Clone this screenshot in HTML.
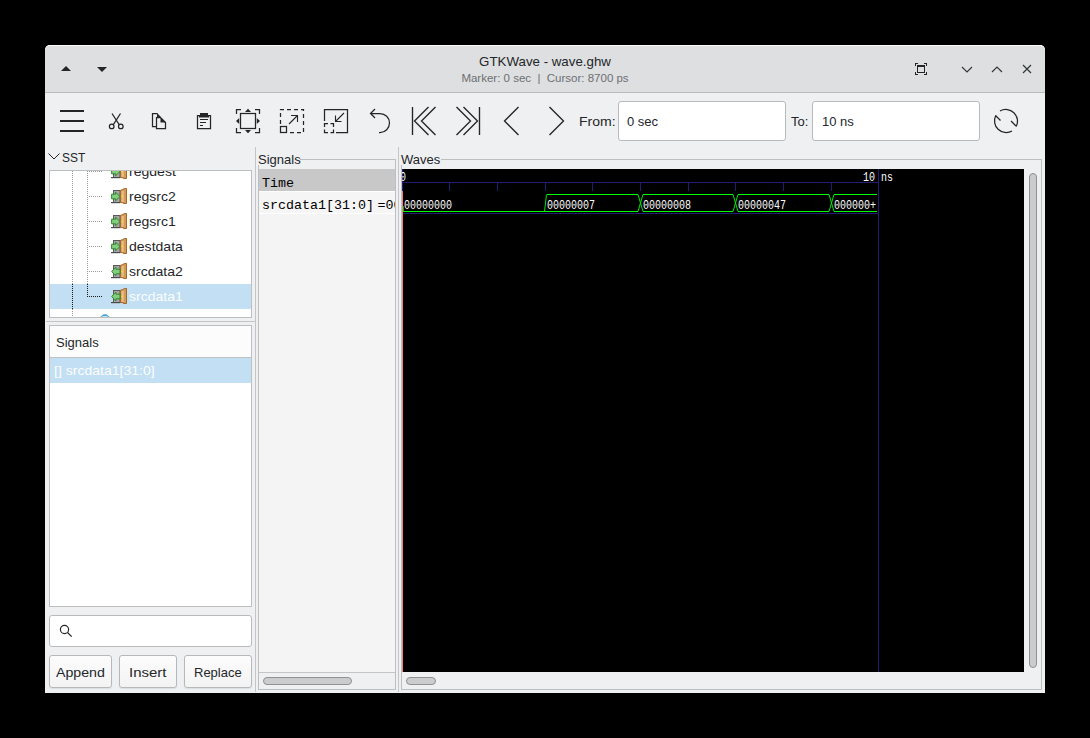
<!DOCTYPE html>
<html><head><meta charset="utf-8">
<style>
*{margin:0;padding:0;box-sizing:border-box}
html,body{width:1090px;height:738px;background:#000;overflow:hidden;font-family:"Liberation Sans",sans-serif;color:#232629}
.a{position:absolute;white-space:nowrap}
svg{position:absolute;overflow:visible}
#win{position:absolute;left:45px;top:45px;width:1000px;height:648px;background:#eff0f1;border-radius:5px 5px 0 0;overflow:hidden}
.mono{font-family:"Liberation Mono",monospace}
.t13{font-size:13px}
</style></head><body>
<div id="win"></div>

<!-- title bar -->
<div class="a" style="left:45px;top:45px;width:1000px;height:47px;background:#dedfe1;border-radius:5px 5px 0 0;border-top:1px solid #fbfbfb"></div>
<div class="a" style="left:45px;top:92px;width:1000px;height:1px;background:#b9babc"></div>
<div class="a" style="left:45px;width:1000px;top:54px;text-align:center;font-size:13.3px;color:#232629">GTKWave - wave.ghw</div>
<div class="a" style="left:45px;width:1000px;top:72px;text-align:center;font-size:11.5px;color:#6c6f73">Marker: 0 sec &nbsp;|&nbsp; Cursor: 8700 ps</div>

<!-- title bar buttons -->
<svg style="left:0;top:0" width="1090" height="100">
  <path d="M61 71 L66 66 L71 71 Z" fill="#232629"/>
  <path d="M97 67 L107 67 L102 72 Z" fill="#232629"/>
  <g fill="#232629" shape-rendering="crispEdges">
    <rect x="917" y="65" width="8" height="2"/>
    <rect x="917" y="65" width="1" height="8"/>
    <rect x="924" y="65" width="1" height="8"/>
    <rect x="917" y="72" width="8" height="1"/>
    <path d="M915 63h3v1h-2v2h-1z M927 63h-3v1h2v2h1z M915 75h3v-1h-2v-2h-1z M927 75h-3v-1h2v-2h1z"/>
  </g>
  <path d="M962 67 L967 72 L972 67" fill="none" stroke="#31363b" stroke-width="1.15"/>
  <path d="M992 72 L997 67 L1002 72" fill="none" stroke="#31363b" stroke-width="1.15"/>
  <path d="M1023 65 L1031 73 M1031 65 L1023 73" fill="none" stroke="#31363b" stroke-width="1.15"/>
</svg>

<!-- toolbar icons -->
<svg style="left:0;top:0" width="1090" height="150">
  <g fill="#232629" shape-rendering="crispEdges">
    <rect x="60" y="110" width="24" height="2"/>
    <rect x="60" y="120" width="24" height="2"/>
    <rect x="60" y="130" width="24" height="2"/>
  </g>
  <g fill="none" stroke="#232629" stroke-width="1.25">
    <!-- scissors -->
    <path d="M112 113.5 L120.3 126.3 M120.5 113.5 L112.2 126.3"/>
    <circle cx="111.7" cy="126.4" r="2.3" fill="#eff0f1"/>
    <circle cx="120.8" cy="126.4" r="2.3" fill="#eff0f1"/>
    <!-- copy -->
    <path d="M156.5 126.5 H152.5 V113.5 H157.5"/>
    <path d="M156.5 117.5 H160.5 L165.5 122.5 V128.5 H156.5 Z"/>
    <!-- paste -->
    <path d="M199.5 115.5 H197.5 V128.5 H210.5 V115.5 H208.5"/>
    <path d="M200 119.5 H208 M200 122.5 H206 M200 125.5 H203" stroke-width="1.1"/>
    <!-- fit -->
    <path d="M236.5 114 V109.5 H241 M255 109.5 H259.5 V114 M259.5 128 V132.5 H255 M241 132.5 H236.5 V128"/>
    <rect x="240.5" y="113.5" width="15" height="15"/>
    <!-- zoom in -->
    <path d="M280.5 124 V109.5 H303.5 V132.5 H288" stroke-dasharray="4 3"/>
    <rect x="280.5" y="126.5" width="6" height="6"/>
    <path d="M289 124 L297.5 115.5 M291 115.5 H297.5 V122" stroke-width="1.1"/>
    <!-- zoom out -->
    <path d="M324.5 121 V109.5 H347.5 V132.5 H336"/>
    <path d="M324.5 127 V123.5 H328 M330.5 123.5 H333.5 V127 M333.5 129.5 V132.5 H330.5 M328 132.5 H324.5 V129.5"/>
    <path d="M344 113 L335.5 121.5 M335.5 115.5 V121.5 H341.5" stroke-width="1.1"/>
    <!-- undo -->
    <path d="M375 109 L370.5 113.5 L375 118 M370.5 113.5 H380 A9.5 9.5 0 0 1 380 132.5 H379"/>
  </g>
  <g fill="none" stroke="#232629" stroke-width="1.35">
    <!-- first -->
    <path d="M412.5 107 V135 M428.5 107 L414.5 121 L428.5 135 M435.5 107 L421.5 121 L435.5 135"/>
    <!-- last -->
    <path d="M479.5 107 V135 M456.5 107 L470.5 121 L456.5 135 M463.5 107 L477.5 121 L463.5 135"/>
    <!-- prev / next -->
    <path d="M518.5 107 L504.5 121 L518.5 135"/>
    <path d="M549.5 107 L563.5 121 L549.5 135"/>
  </g>
  <g fill="none" stroke="#232629" stroke-width="1.25">
    <!-- refresh -->
    <path d="M995.8 115.5 A11.7 11.7 0 0 0 1012 131"/>
    <path d="M1016.2 126.5 A11.7 11.7 0 0 0 1000 111"/>
    <path d="M995.5 115.5 L1000.5 120.5 M1011 121 L1016 126"/>
  </g>
  <g fill="#232629">
    <path d="M200 113 H208 V115 H209 V117.5 H199 V115 H200 Z"/>
    <path d="M157 113 L161 117 H157 Z"/>
    <path d="M160.5 117 L166 122.5 H160.5 Z"/>
    <path d="M245 112 L248 108.8 L251 112 Z M245 130 L251 130 L248 133.2 Z M239.2 118 L239.2 124 L236 121 Z M256.8 118 L260 121 L256.8 124 Z"/>
  </g>
</svg>

<!-- From / To -->
<div class="a t13" style="left:579px;top:114px;transform:scaleX(1.08);transform-origin:0 0">From:</div>
<div class="a" style="left:618px;top:101px;width:168px;height:40px;background:#fff;border:1px solid #b8babc;border-radius:3px"></div>
<div class="a t13" style="left:627px;top:114px">0 sec</div>
<div class="a t13" style="left:791px;top:114px">To:</div>
<div class="a" style="left:812px;top:101px;width:168px;height:40px;background:#fff;border:1px solid #b8babc;border-radius:3px"></div>
<div class="a t13" style="left:822px;top:114px">10 ns</div>

<!-- ===== left pane ===== -->
<svg style="left:0;top:0" width="100" height="170">
  <path d="M48.5 153.5 L54 159 L59.5 153.5" fill="none" stroke="#232629" stroke-width="1"/>
</svg>
<div class="a t13" style="left:62px;top:150px;transform:scaleX(0.92);transform-origin:0 0">SST</div>

<!-- tree box -->
<div class="a" style="left:49px;top:170px;width:203px;height:148px;background:#fff;border:1px solid #bcbebf"></div>
<!--TREE-->
<div class="a" style="left:50px;top:171px;width:201px;height:146px;overflow:hidden">
<svg style="left:-50px;top:-171px" width="260" height="330">
<defs>
<g id="door">
 <rect x="2.5" y="2.5" width="6.5" height="12" fill="#a7a7aa" stroke="#595959"/>
 <rect x="0" y="14" width="9" height="1.2" fill="#4a4a4a"/>
 <path d="M9.4 2.4 L11.5 1.6 L13.5 0.5 H15.5 V15.5 H12.5 V14.6 H9.4 Z" fill="#d39a58" stroke="#9e5c18" stroke-width="0.9"/>
 <rect x="10.6" y="3" width="2.2" height="11" fill="#e6bf86"/>
 <circle cx="11" cy="8.3" r="0.9" fill="#ffd43b"/>
</g>
<g id="icR"><use href="#door"/><path d="M0.6 6.2 H4.6 V4.2 L9 8.5 L4.6 12.8 V10.8 H0.6 Z" fill="#84cc7f" stroke="#2e8a2a" stroke-width="1"/></g>
<g id="icL"><use href="#door"/><path d="M9 6.2 H5 V4.2 L0.6 8.5 L5 12.8 V10.8 H9 Z" fill="#84cc7f" stroke="#2e8a2a" stroke-width="1"/></g>
</defs>
<rect x="50" y="284" width="201" height="25" fill="#c2dff3"/>
<g shape-rendering="crispEdges" stroke-dasharray="1 1" stroke-width="1" fill="none">
<path d="M72.5 171 V318 M87.5 171 V297" stroke="#9a9a9a"/>
<rect x="60" y="284" width="50" height="25" fill="#c2dff3"/><path d="M72.5 284 V309 M87.5 284 V295" stroke="#1a1a1a"/>
<path d="M89 171.5 H102 M89 196.5 H102 M89 221.5 H102 M89 246.5 H102 M89 271.5 H102 " stroke="#9a9a9a"/>
<path d="M87 296.5 H102" stroke="#1a1a1a"/>
</g>
<use href="#icR" x="111" y="163"/>
<use href="#icR" x="111" y="188"/>
<use href="#icR" x="111" y="213"/>
<use href="#icR" x="111" y="238"/>
<use href="#icL" x="111" y="263"/>
<use href="#icL" x="111" y="288"/>
<path d="M99.5 318 L102 315.5 L103.5 314.3 H106.5 L108 315.5 L110.5 318 Z" fill="#4aa6d6"/><rect x="102.5" y="316" width="5" height="1.6" fill="#bfe6f8"/>
</svg>
<div class="a" style="left:79px;top:-7px;color:#232629;font-size:13.5px;transform:scaleX(1.04);transform-origin:0 0">regdest</div>
<div class="a" style="left:79px;top:18px;color:#232629;font-size:13.5px;transform:scaleX(1.04);transform-origin:0 0">regsrc2</div>
<div class="a" style="left:79px;top:43px;color:#232629;font-size:13.5px;transform:scaleX(1.04);transform-origin:0 0">regsrc1</div>
<div class="a" style="left:79px;top:68px;color:#232629;font-size:13.5px;transform:scaleX(1.04);transform-origin:0 0">destdata</div>
<div class="a" style="left:79px;top:93px;color:#232629;font-size:13.5px;transform:scaleX(1.04);transform-origin:0 0">srcdata2</div>
<div class="a" style="left:79px;top:118px;color:#fcfdfe;font-size:13.5px;transform:scaleX(1.04);transform-origin:0 0">srcdata1</div>
</div>
<!--/TREE-->

<!-- separator -->
<div class="a" style="left:46px;top:321px;width:210px;height:1px;background:#c3c5c6"></div>

<!-- signals list box -->
<div class="a" style="left:49px;top:325px;width:203px;height:282px;background:#fff;border:1px solid #bcbebf"></div>
<div class="a" style="left:50px;top:326px;width:201px;height:32px;background:#fcfcfc;border-bottom:1px solid #c0c1c2"></div>
<div class="a t13" style="left:56px;top:335px">Signals</div>
<div class="a" style="left:50px;top:358px;width:201px;height:25px;background:#c2dff3"></div>
<div class="a t13" style="left:54px;top:363px;color:#fcfdfe;transform:scaleX(1.08);transform-origin:0 0">[] srcdata1[31:0]</div>

<!-- search -->
<div class="a" style="left:49px;top:615px;width:203px;height:32px;background:#fff;border:1px solid #b8babc;border-radius:3px"></div>
<svg style="left:0;top:0" width="100" height="700">
  <circle cx="64.5" cy="629.5" r="4.1" fill="none" stroke="#232629" stroke-width="1.2"/>
  <path d="M67.5 632.5 L71.7 636.7" stroke="#232629" stroke-width="1.2"/>
</svg>

<!-- buttons -->
<div class="a" style="left:49px;top:655px;width:63px;height:33px;background:linear-gradient(#fcfcfc,#f3f3f3);border:1px solid #b6b8ba;border-radius:3px;box-shadow:0 1px 1px rgba(0,0,0,.08)"></div>
<div class="a t13" style="left:56px;top:665px;transform:scaleX(1.09);transform-origin:0 0">Append</div>
<div class="a" style="left:119px;top:655px;width:58px;height:33px;background:linear-gradient(#fcfcfc,#f3f3f3);border:1px solid #b6b8ba;border-radius:3px;box-shadow:0 1px 1px rgba(0,0,0,.08)"></div>
<div class="a t13" style="left:129px;top:665px;transform:scaleX(1.15);transform-origin:0 0">Insert</div>
<div class="a" style="left:184px;top:655px;width:68px;height:33px;background:linear-gradient(#fcfcfc,#f3f3f3);border:1px solid #b6b8ba;border-radius:3px;box-shadow:0 1px 1px rgba(0,0,0,.08)"></div>
<div class="a t13" style="left:194px;top:665px">Replace</div>

<!-- paned separators -->
<div class="a" style="left:255px;top:147px;width:1px;height:545px;background:#c3c5c6"></div>
<div class="a" style="left:398px;top:147px;width:1px;height:545px;background:#c3c5c6"></div>

<!-- ===== signals panel ===== -->
<div class="a t13" style="left:258px;top:152px;background:#eff0f1;padding-right:1px">Signals</div>
<div class="a" style="left:300px;top:159px;width:96px;height:1px;background:#bcbebf"></div>
<div class="a" style="left:258px;top:165px;width:1px;height:525px;background:#bcbebf"></div>
<div class="a" style="left:395px;top:159px;width:1px;height:531px;background:#bcbebf"></div>
<div class="a" style="left:258px;top:689px;width:138px;height:1px;background:#bcbebf"></div>
<div class="a" style="left:259px;top:169px;width:136px;height:503px;background:#f4f4f4;overflow:hidden">
  <div class="a" style="left:0;top:0;width:136px;height:22px;background:#c8c8c8"></div>
  <div class="a" style="left:0;top:22px;width:136px;height:23px;background:#f5f5f5;border-top:1px solid #fff;border-bottom:1px solid #fff"></div>
  <div class="a mono" style="left:3px;top:7px;font-size:13.33px;color:#000">Time</div>
  <div class="a mono" style="left:3px;top:29px;font-size:13.33px;color:#000">srcdata1[31:0]</div>
  <div class="a mono" style="left:118.5px;top:29px;font-size:13.33px;color:#000">=00000000</div>
</div>
<div class="a" style="left:259px;top:672px;width:136px;height:1px;background:#c3c5c6"></div>
<div class="a" style="left:263px;top:677px;width:89px;height:8px;background:#cbcccd;border:1px solid #8f9193;border-radius:4px"></div>

<!-- ===== waves panel ===== -->
<div class="a t13" style="left:401px;top:152px;background:#eff0f1;padding-right:1px">Waves</div>
<div class="a" style="left:441px;top:159px;width:601px;height:1px;background:#bcbebf"></div>
<div class="a" style="left:401px;top:165px;width:1px;height:525px;background:#bcbebf"></div>
<div class="a" style="left:1041px;top:159px;width:1px;height:531px;background:#bcbebf"></div>
<div class="a" style="left:401px;top:689px;width:641px;height:1px;background:#bcbebf"></div>
<div class="a" style="left:406px;top:677px;width:30px;height:8px;background:#cbcccd;border:1px solid #8f9193;border-radius:4px"></div>
<div class="a" style="left:1029px;top:173px;width:8px;height:495px;background:#cbcccd;border:1px solid #8f9193;border-radius:4px"></div>

<div class="a" style="left:402px;top:169px;width:622px;height:503px;background:#000;overflow:hidden">
<svg style="left:0;top:0" width="622" height="503">
<!--WAVES-->
<g shape-rendering="crispEdges" fill="none" stroke-width="1">
<path d="M0 13.5 H476 M0.5 0 V22 M47.5 14 V22 M95.5 14 V22 M143.5 14 V22 M190.5 14 V22 M238.5 14 V22 M286.5 14 V22 M333.5 14 V22 M381.5 14 V22 M429.5 14 V22 M476.5 0 V503 M0 44.5 H476" stroke="#221f72"/>
<path d="M0.5 22 V503" stroke="#ff7a7a"/>
</g>
<g stroke="#00ff00" fill="none" shape-rendering="crispEdges">
<path d="M1 42.5 H142 M145 25.5 H236 M142 42.5 H236 M241 25.5 H331 M241 42.5 H331 M336 25.5 H427 M336 42.5 H427 M432 25.5 H475 M432 42.5 H475"/><path d="M1.5 37 V42" stroke="#00b000"/>
</g>
<g stroke="#00e800" fill="none" stroke-width="1">
<path d="M142.5 42.5 L144.5 25.5 M236 25.5 L241 42.5 M236 42.5 L241 25.5 M331 25.5 L336 42.5 M331 42.5 L336 25.5 M427 25.5 L432 42.5 M427 42.5 L432 25.5"/>
</g>
<g font-family="Liberation Mono" font-size="10" fill="#ffffff">
<text transform="translate(-2,12) scale(1,1.2)">0</text>
<text transform="translate(461,12) scale(1,1.2)">10</text>
<text transform="translate(479,12) scale(1,1.2)">ns</text>
<text transform="translate(2,40) scale(1,1.2)">00000000</text>
<text transform="translate(145,40) scale(1,1.2)">00000007</text>
<text transform="translate(241,40) scale(1,1.2)">00000008</text>
<text transform="translate(336,40) scale(1,1.2)">00000047</text>
<text transform="translate(432,40) scale(1,1.2)">000000+</text>
</g>
<!--/WAVES-->
</svg>
</div>

</body></html>
